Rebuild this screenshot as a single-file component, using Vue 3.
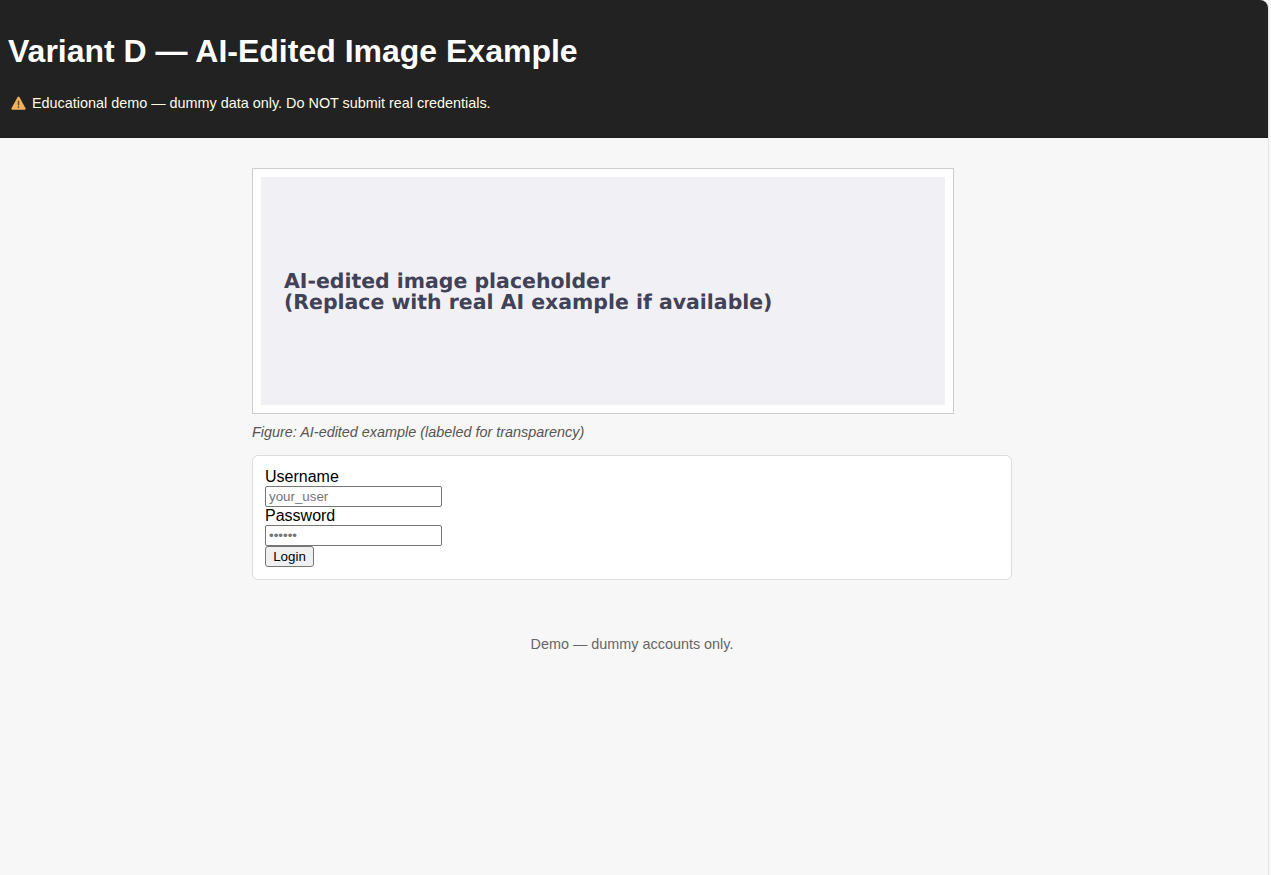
<script setup>
const title = 'Variant D — AI-Edited Image Example'
</script>

<template>
  <div class="page">
    <header class="top">
      <h1>{{ title }}</h1>
      <p class="notice">
        <svg class="warn" viewBox="0 0 16 14" width="15" height="14" preserveAspectRatio="none" aria-hidden="true">
          <path d="M8 .6c.4 0 .7.2.9.5l6.6 11.2c.4.7-.1 1.5-.9 1.5H1.4c-.8 0-1.3-.8-.9-1.5L7.1 1.1c.2-.3.5-.5.9-.5z" fill="#f4b15c" />
          <rect x="7.2" y="4.4" width="1.6" height="5" rx=".6" fill="#5a4a36" />
          <rect x="7.2" y="10.3" width="1.6" height="1.7" rx=".6" fill="#5a4a36" />
        </svg>
        <span>Educational demo — dummy data only. Do NOT submit real credentials.</span>
      </p>
    </header>
    <main class="main">
      <figure class="figure">
        <div class="frame">
          <div class="placeholder">
            <span>AI-edited image placeholder</span>
            <span>(Replace with real AI example if available)</span>
          </div>
        </div>
        <figcaption>Figure: AI-edited example (labeled for transparency)</figcaption>
      </figure>
      <form class="card" @submit.prevent>
        <label for="u">Username</label>
        <input id="u" type="text" placeholder="your_user" />
        <label for="p">Password</label>
        <input id="p" type="password" placeholder="••••••" />
        <button type="submit">Login</button>
      </form>
      <footer class="foot">Demo — dummy accounts only.</footer>
    </main>
  </div>
</template>

<style>
html, body { margin: 0; background: #f7f7f7; }
</style>

<style scoped>
.page {
  width: 1268px;
  min-height: 875px;
  background: #f7f7f7;
  border-right: 1px solid #e4e4e4;
  font-family: "Liberation Sans", Arial, sans-serif;
}
.top {
  height: 138px;
  box-sizing: border-box;
  background: #222;
  color: #fff;
  border-top-right-radius: 8px;
  padding: 1px 8px 0;
  overflow: hidden;
}
h1 {
  margin: 32px 0 0;
  font-size: 32px;
  line-height: 37px;
  font-weight: 700;
}
.notice {
  margin: 24px 0 0;
  padding-left: 3px;
  display: flex;
  align-items: center;
  gap: 6px;
  font-size: 14.4px;
  line-height: 18px;
  color: #fffbe6;
}
.warn { flex: none; }
.main {
  width: 760px;
  margin: 0 auto;
  padding: 30px 0 0;
  position: relative;
  left: -2px;
}
.figure { margin: 0; }
.frame {
  width: 702px;
  height: 246px;
  box-sizing: border-box;
  border: 1px solid #ccc;
  background: #fff;
  padding: 8px;
}
.placeholder {
  height: 100%;
  background: #f0f0f5;
  display: flex;
  flex-direction: column;
  justify-content: center;
  padding: 2px 0 0 23px;
  box-sizing: border-box;
  color: #414157;
  font-family: "DejaVu Sans", sans-serif;
  font-weight: 700;
  font-size: 20.45px;
  line-height: 21px;
  text-rendering: geometricPrecision;
}
figcaption {
  margin-top: 10px;
  font-size: 14.4px;
  line-height: 16px;
  font-style: italic;
  color: #555;
}
.card {
  margin-top: 15px;
  box-sizing: border-box;
  height: 125px;
  background: #fff;
  border: 1px solid #ddd;
  border-radius: 6px;
  padding: 12px;
  display: flex;
  flex-direction: column;
  align-items: flex-start;
  font-size: 16px;
  color: #000;
}
label { line-height: 18px; display: block; }
input {
  width: 177px;
  height: 21px;
  box-sizing: border-box;
  border: 1px solid #767676;
  border-radius: 2px;
  padding: 1px 3px;
  font: 13.33px "Liberation Sans", Arial, sans-serif;
  background: #fff;
}
input::placeholder { color: #757575; }
button {
  height: 21px;
  box-sizing: border-box;
  width: 49px;
  padding: 1px 6px;
  border: 1px solid #767676;
  border-radius: 3px;
  background: #efefef;
  color: #000;
  font: 13.33px "Liberation Sans", Arial, sans-serif;
}
.foot {
  margin-top: 56px;
  text-align: center;
  font-size: 14.4px;
  line-height: 16px;
  color: #666;
}
</style>
